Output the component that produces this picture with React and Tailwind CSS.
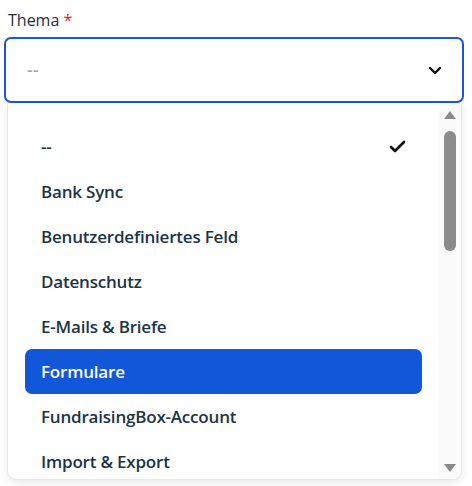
import { useState } from 'react'

const OPTIONS = [
  '--',
  'Bank Sync',
  'Benutzerdefiniertes Feld',
  'Datenschutz',
  'E-Mails & Briefe',
  'Formulare',
  'FundraisingBox-Account',
  'Import & Export',
]

export default function App() {
  const [selected] = useState('--')
  const [active, setActive] = useState('Formulare')

  return (
    <div className="w-[472px] h-[486px] bg-white pl-[4px] pr-[8px] pt-[9px]" style={{ fontFamily: '"Open Sans", "Noto Sans", sans-serif' }}>
      <label className="block pl-[4px] text-[16px] leading-[22px] text-[#1f2d3a]">
        Thema <span className="text-[#e02424]">*</span>
      </label>

      <div className="relative mt-[6px]">
        <button className="w-full h-[66px] flex items-center justify-between pl-[21px] pr-[20px] border-2 border-[#1a56db] rounded-[7px] bg-white">
          <span className="text-[17px] font-semibold text-[#9aa5b1] tracking-[0.5px]">--</span>
          <svg width="14" height="9" viewBox="0 0 14 9" fill="none">
            <path d="M2 2l5 5 5-5" stroke="#111" strokeWidth="2.4" strokeLinecap="round" strokeLinejoin="round" />
          </svg>
        </button>

        <div className="ml-[3px] mr-[2px] h-[377px] flex bg-white rounded-b-[9px] border border-t-0 border-[#e5e7eb] shadow-[0_4px_10px_rgba(0,0,0,0.08)] overflow-hidden">
          <ul className="flex-1 pt-[21px] pl-[17px] pr-[17px] overflow-hidden">
            {OPTIONS.map(opt => {
              const isActive = opt === active
              return (
                <li
                  key={opt}
                  onMouseEnter={() => setActive(opt)}
                  className={`h-[45px] flex items-center justify-between pl-[16px] pr-[16px] rounded-[7px] text-[17px] font-semibold tracking-[-0.2px] cursor-pointer ${isActive ? 'bg-[#1257d9] text-white' : 'text-[#1b3447]'}`}
                >
                  <span>{opt}</span>
                  {opt === selected && (
                    <svg width="17" height="13" viewBox="0 0 17 13" fill="none">
                      <path d="M2 7l4 4 9-9" stroke={isActive ? '#fff' : '#111'} strokeWidth="2.6" strokeLinecap="round" strokeLinejoin="round" />
                    </svg>
                  )}
                </li>
              )
            })}
          </ul>

          <div className="w-[22px] bg-[#fafafa] flex flex-col items-center pt-[7px] pb-[6px]">
            <svg width="14" height="10" viewBox="0 0 14 10"><path d="M7 1l6 8H1z" fill="#8a8a8a" /></svg>
            <div className="mt-[11px] w-[12px] h-[120px] rounded-full bg-[#8c8c8c]" />
            <div className="flex-1" />
            <svg width="14" height="10" viewBox="0 0 14 10"><path d="M1 1h12L7 9z" fill="#8a8a8a" /></svg>
          </div>
        </div>
      </div>
    </div>
  )
}
